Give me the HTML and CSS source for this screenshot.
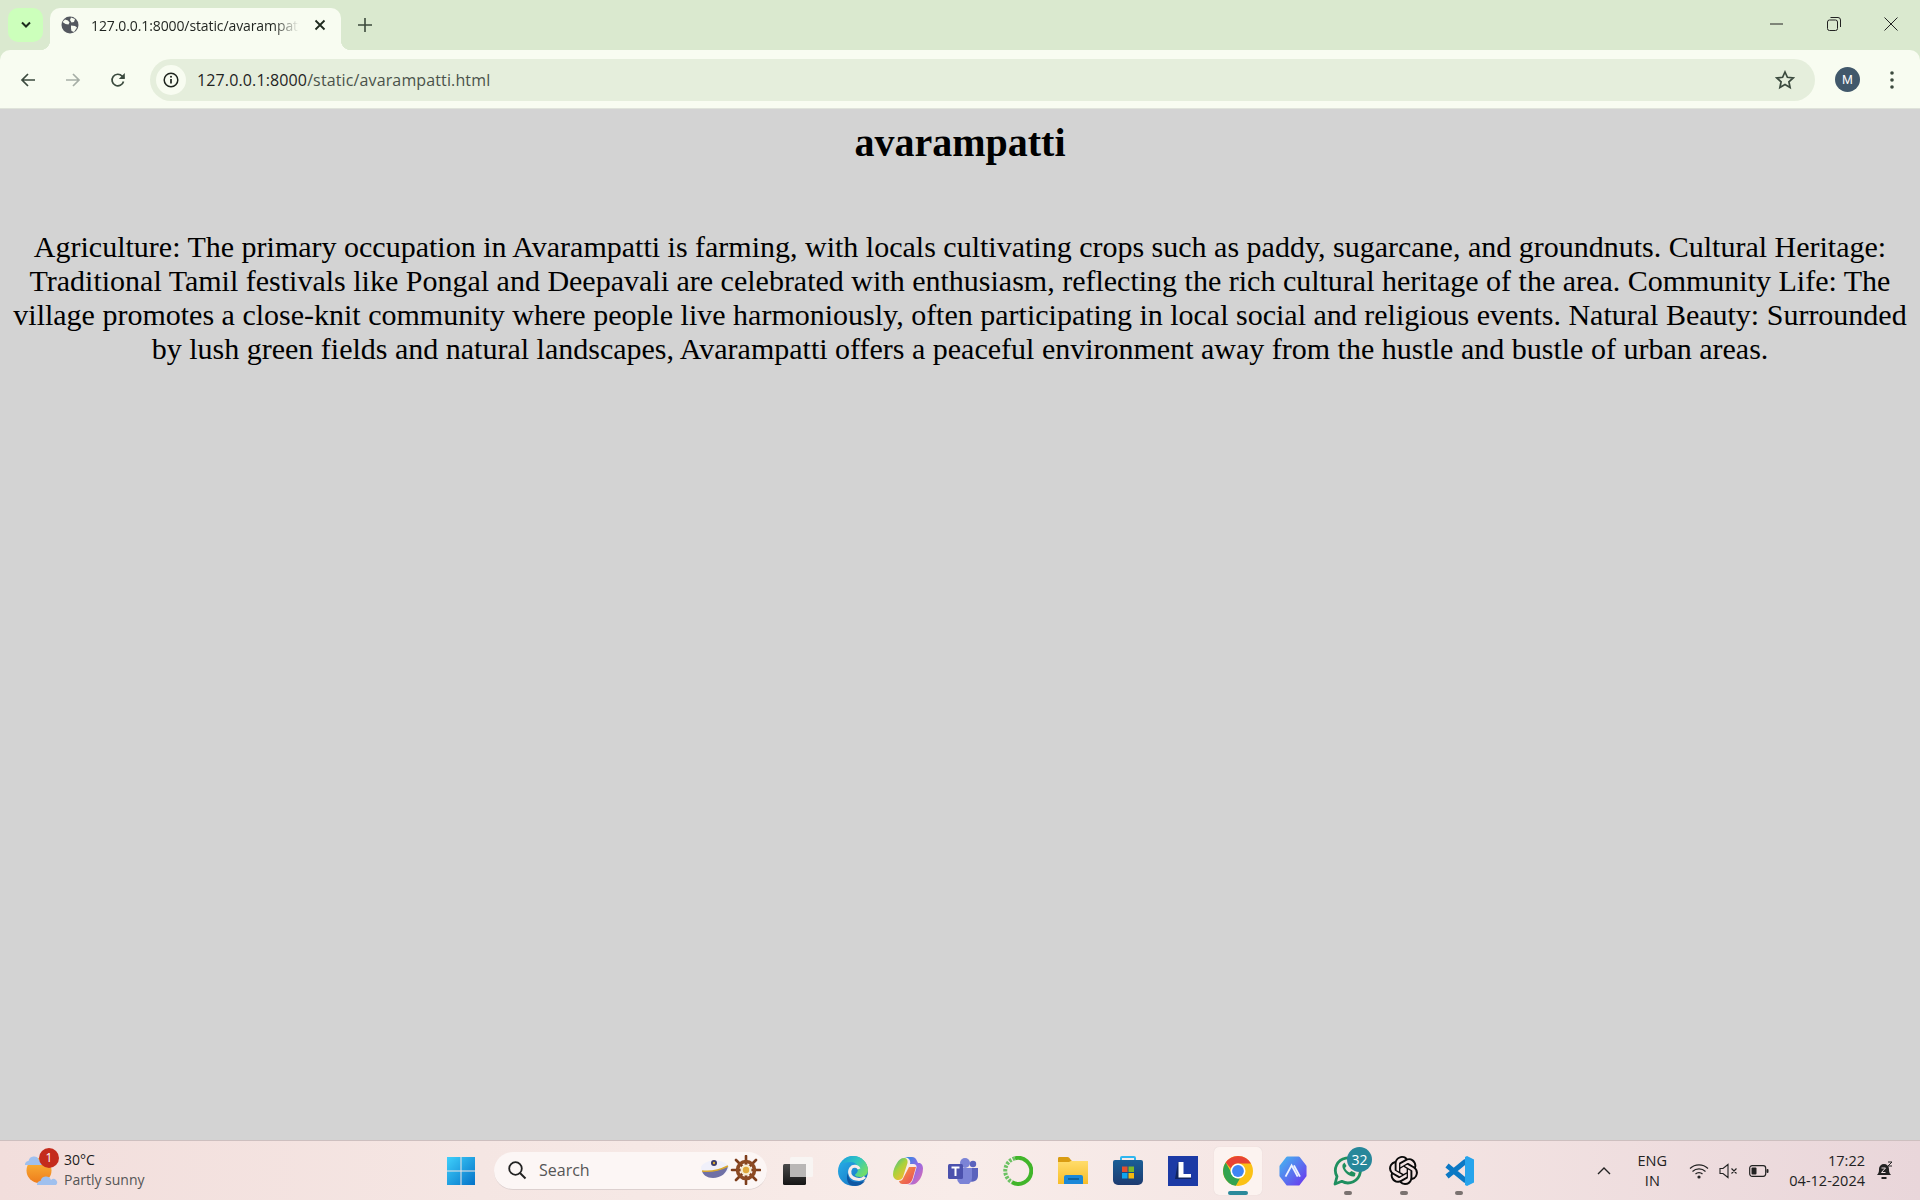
FILE: index.html
```html
<!DOCTYPE html>
<html lang="en">
<head>
    <meta charset="UTF-8">
    <title>avarampatti</title>
    <link rel="stylesheet" href="styles.css">
</head>
<body>
    <header class="chrome">
        <div class="tabstrip">
            <div class="tab-search">
                <svg width="12" height="8" viewBox="0 0 12 8"><path d="M2 1.500l4 4 4-4" fill="none" stroke="#1c2a1c" stroke-width="2"/></svg>
            </div>
            <div class="tab">
                <svg class="tab-globe" width="18" height="18" viewBox="0 0 18 18">
                    <circle cx="9" cy="9" r="8.500" fill="#54585f"/>
                    <path d="M4 3.500l3 1 1.500 2-1 2-3-.5-3-2zM10 1.500l4 1.500-1 3-2.500.5-1.500-2.500zM10 9.500l4 .5 2 1.500-3 4.500-2.500-1-.5-2.500z" fill="#f8fcf1"/>
                </svg>
                <span class="tab-title">127.0.0.1:8000/static/avarampatti.html</span>
                <svg class="tab-close" width="12" height="12" viewBox="0 0 12 12"><path d="M1.500 1.500l9 9M10.500 1.500l-9 9" stroke="#1f2a1f" stroke-width="1.800"/></svg>
            </div>
            <svg class="new-tab" width="14" height="14" viewBox="0 0 14 14"><path d="M7 0v14M0 7h14" stroke="#3c4a3c" stroke-width="1.600"/></svg>
            <div class="window-buttons">
                <svg width="14" height="14" viewBox="0 0 14 14"><path d="M0 7h13" stroke="#222" stroke-width="1"/></svg>
                <svg width="14" height="14" viewBox="0 0 14 14"><rect x=".5" y="3" width="10" height="10.500" rx="2" fill="none" stroke="#222"/><path d="M3.500 .5h7.500a2.500 2.500 0 0 1 2.500 2.500v7" fill="none" stroke="#222"/></svg>
                <svg width="14" height="14" viewBox="0 0 14 14"><path d="M.5 .5l13 13M13.500 .5l-13 13" stroke="#222" stroke-width="1"/></svg>
            </div>
        </div>

        <div class="toolbar">
            <svg class="tool" width="16" height="16" viewBox="0 0 16 16"><path d="M15 8H2M8 2L2 8l6 6" fill="none" stroke="#3b4a3e" stroke-width="1.700"/></svg>
            <svg class="tool" width="16" height="16" viewBox="0 0 16 16"><path d="M1 8h13M8 2l6 6-6 6" fill="none" stroke="#a6aea6" stroke-width="1.700"/></svg>
            <svg class="tool tool-reload" width="16" height="16" viewBox="0 0 16 16"><path d="M13.500 9.500a5.800 5.800 0 1 1-1.300-5.300L14 6" fill="none" stroke="#3b4a3e" stroke-width="1.700"/><path d="M14.800 1v6h-6z" fill="#3b4a3e"/></svg>
            <div class="omnibox">
                <div class="site-info">
                    <svg width="16" height="16" viewBox="0 0 16 16"><circle cx="8" cy="8" r="6.800" fill="none" stroke="#1e241e" stroke-width="1.500"/><path d="M8 7v4.500" stroke="#1e241e" stroke-width="1.700"/><circle cx="8" cy="4.800" r="1" fill="#1e241e"/></svg>
                </div>
                <div class="url"><span class="url-host">127.0.0.1:8000</span>/static/avarampatti.html</div>
                <svg width="20" height="20" viewBox="0 0 20 20"><path d="M10 2l2.400 5.300 5.800.6-4.300 3.900 1.200 5.700-5.100-2.900-5.100 2.900 1.200-5.700L1.800 7.900l5.800-.6z" fill="none" stroke="#3b4a3e" stroke-width="1.700"/></svg>
            </div>
            <div class="avatar">M</div>
            <svg class="menu" width="4" height="18" viewBox="0 0 4 18"><circle cx="2" cy="2" r="1.800" fill="#3b4a3e"/><circle cx="2" cy="9" r="1.800" fill="#3b4a3e"/><circle cx="2" cy="16" r="1.800" fill="#3b4a3e"/></svg>
        </div>
    </header>

    <main class="page">
        <h1>avarampatti</h1>
        <p>Agriculture: The primary occupation in Avarampatti is farming, with locals cultivating crops such as paddy, sugarcane, and groundnuts. Cultural Heritage: Traditional Tamil festivals like Pongal and Deepavali are celebrated with enthusiasm, reflecting the rich cultural heritage of the area. Community Life: The village promotes a close-knit community where people live harmoniously, often participating in local social and religious events. Natural Beauty: Surrounded by lush green fields and natural landscapes, Avarampatti offers a peaceful environment away from the hustle and bustle of urban areas.</p>
    </main>

    <footer class="taskbar">
        <div class="weather">
            <div class="weather-icon">
                <svg width="34" height="36" viewBox="0 0 34 36">
                    <defs><linearGradient id="sun" x1="0" y1="0" x2="0" y2="1"><stop offset="0" stop-color="#fbb93a"/><stop offset="1" stop-color="#ee7d1c"/></linearGradient></defs>
                    <circle cx="15" cy="17.500" r="12.500" fill="url(#sun)"/>
                    <path d="M1 12a3.500 3.500 0 0 1 3.500-4 5.500 5.500 0 0 1 10.500-1 3.500 3.500 0 0 1 3 5z" fill="#9fc0ee"/>
                    <path d="M13 32a3.500 3.500 0 0 1 3.500-4 5.500 5.500 0 0 1 10.500-1 3.500 3.500 0 0 1 5 5z" fill="#9fc0ee"/>
                </svg>
                <span class="weather-badge">1</span>
            </div>
            <div class="weather-text">
                <div class="temp">30°C</div>
                <div class="cond">Partly sunny</div>
            </div>
        </div>

        <div class="center">
            <div class="start">
                <svg width="30" height="30" viewBox="0 0 30 30">
                    <defs><linearGradient id="win" x1="0" y1="0" x2="1" y2="1"><stop offset="0" stop-color="#3fd0fb"/><stop offset="1" stop-color="#0472c8"/></linearGradient></defs>
                    <path d="M1 1h13.500v13.500H1zM15.500 1H29v13.500H15.500zM1 15.500h13.500V29H1zM15.500 15.500H29V29H15.500z" fill="url(#win)"/>
                </svg>
            </div>
            <div class="search">
                <svg width="20" height="20" viewBox="0 0 20 20"><circle cx="8.500" cy="8.500" r="6.300" fill="none" stroke="#222" stroke-width="1.800"/><path d="M13 13l5.500 5.500" stroke="#222" stroke-width="2"/></svg>
                <span class="search-label">Search</span>
                <svg class="search-art" width="61" height="30" viewBox="0 0 61 30">
                    <ellipse cx="15" cy="13" rx="14" ry="7.500" fill="#f0f0fa"/>
                    <path d="M2 16c7 1 16 0 26-5-1 7-7 12-15 12-6 0-10-3-11-7z" fill="#6f70a6"/>
                    <path d="M2 16c7 1 16 0 26-5" fill="none" stroke="#d9a92f" stroke-width="1.500"/>
                    <circle cx="14" cy="8" r="3" fill="#3a3a6a"/>
                    <circle cx="14" cy="8" r="1.200" fill="#d9a92f"/>
                    <path d="M46 1v28M32 15h28M36 5l20 20M56 5L36 25" stroke="#7d3d1b" stroke-width="2.600" stroke-linecap="round"/>
                    <circle cx="46" cy="15" r="8.500" fill="none" stroke="#8c4a23" stroke-width="3.600"/>
                    <circle cx="46" cy="15" r="5.500" fill="#f6ecd2"/>
                    <circle cx="46" cy="15" r="3.200" fill="#e0a93c"/>
                </svg>
            </div>
            <div class="apps">
                <div class="app">
                    <svg width="30" height="28" viewBox="0 0 30 28">
                        <defs><linearGradient id="snapd" x1="0" y1="0" x2="0" y2="1"><stop offset="0" stop-color="#4a4a4a"/><stop offset="1" stop-color="#151515"/></linearGradient></defs>
                        <rect x="0" y="7" width="23" height="21" rx="1.500" fill="url(#snapd)"/>
                        <rect x="7" y="0" width="23" height="20" rx="1.500" fill="#f8f5f3"/>
                        <rect x="7" y="7" width="16" height="13" fill="#b9b7b6"/>
                    </svg>
                </div>
                <div class="app">
                    <svg width="30" height="30" viewBox="0 0 30 30">
                        <defs>
                            <linearGradient id="edge" x1="0" y1="0" x2="1" y2="1"><stop offset="0" stop-color="#2ab4ea"/><stop offset=".7" stop-color="#1a7fcb"/><stop offset="1" stop-color="#0d5aa6"/></linearGradient>
                            <linearGradient id="edget" x1="0" y1="0" x2="1" y2=".6"><stop offset="0" stop-color="#1c9ce0"/><stop offset=".55" stop-color="#30c7c0"/><stop offset="1" stop-color="#6fdc6b"/></linearGradient>
                        </defs>
                        <circle cx="15" cy="15" r="15" fill="url(#edge)"/>
                        <path d="M2 8C6 2 11 0 15 0c9 0 15 7 15 14 0 5-4 7-8 7-3 0-5-1-5-2s3-2 3-6c0-4-3-7-7-7-5 0-9 1-11 2z" fill="url(#edget)"/>
                        <path d="M21 13c-1-3-6-4-8-1-3 4-1 10 5 11 4 1 7 0 9-2" fill="none" stroke="#f8ecea" stroke-width="3"/>
                        <path d="M12 29c-3-3-4-8-2-12 0 5 3 9 8 9 4 .5 7 0 9-1-2 3-6 5-10 5z" fill="#0f57a3"/>
                    </svg>
                </div>
                <div class="app">
                    <svg width="30" height="28" viewBox="0 0 30 28">
                        <defs>
                            <linearGradient id="cop" x1="0" y1="0" x2="1" y2="1"><stop offset="0" stop-color="#1f8fe0"/><stop offset=".5" stop-color="#8f6be8"/><stop offset="1" stop-color="#ea6aa8"/></linearGradient>
                            <linearGradient id="cop2" x1="0" y1="0" x2=".7" y2="1"><stop offset="0" stop-color="#30b8a0"/><stop offset=".5" stop-color="#a8d23c"/><stop offset="1" stop-color="#f6bb2e"/></linearGradient>
                            <linearGradient id="cop3" x1="0" y1="0" x2="1" y2="1"><stop offset="0" stop-color="#f6a03a"/><stop offset="1" stop-color="#e8445c"/></linearGradient>
                        </defs>
                        <path d="M11 0h8c2.500 0 4 1.500 5 4l1 2h1c2.500 0 4 2.500 4 5.500 0 5-2 10-5 13-1.500 2-3.500 3-5.500 3H14c3 0 5-2 6-5l3.500-12c.5-2-1-3.500-3-3.500H17c1-3-1-7-6-7z" fill="url(#cop)"/>
                        <path d="M4 6c1.500-3 4-5 7-5 2.500 0 4 2 3.500 5L10 20c-.7 2-2.500 3-4.500 3C2.500 23 0 21 0 17.500 0 13 2 9 4 6z" fill="url(#cop2)"/>
                        <path d="M16 10h7l-3.500 12c-1 3-3 5-6 5h-4c-2 0-3-1-3.500-3 2 0 4-1 4.500-3.500z" fill="url(#cop3)"/>
                    </svg>
                </div>
                <div class="app">
                    <svg width="30" height="26" viewBox="0 0 30 26">
                        <circle cx="17" cy="5" r="5" fill="#7b83d6"/><circle cx="25" cy="6" r="3.200" fill="#5b63bd"/>
                        <path d="M20 10h10v8a6 6 0 0 1-9 5z" fill="#5b63bd"/>
                        <path d="M9 10h15v10a6 6 0 0 1-15 0z" fill="#7b83d6"/>
                        <rect x="0" y="6" width="15" height="15" rx="1.500" fill="#4b51ad"/>
                        <path d="M3.500 9.500h8M7.500 9.500v8.500" stroke="#fff" stroke-width="2"/>
                    </svg>
                </div>
                <div class="app">
                    <svg width="30" height="30" viewBox="0 0 30 30">
                        <path d="M12 2.300a13 13 0 1 1-3 24" fill="none" stroke="#41b52a" stroke-width="4"/>
                        <path d="M12 2.300a13 13 0 0 0-3 24" fill="none" stroke="#6cc263" stroke-width="4" stroke-dasharray="2.500 1.300"/>
                    </svg>
                </div>
                <div class="app">
                    <svg width="30" height="27" viewBox="0 0 30 27">
                        <defs><linearGradient id="fold" x1="0" y1="0" x2="0" y2="1"><stop offset="0" stop-color="#ffdc6b"/><stop offset="1" stop-color="#f8bd28"/></linearGradient></defs>
                        <path d="M1.500 0h8c1.500 0 2 1 3 2.500L14 4h16v3H0V1.500C0 .5.500 0 1.500 0z" fill="#d99c12"/>
                        <path d="M0 5h11l2-1h17v23H0z" fill="url(#fold)"/>
                        <path d="M6 27v-7a2 2 0 0 1 2-2h15a2 2 0 0 1 2 2v7z" fill="#1b88d8"/>
                        <path d="M10 22h11" stroke="#0a4f80" stroke-width="1.300"/>
                    </svg>
                </div>
                <div class="app">
                    <svg width="30" height="29" viewBox="0 0 30 29">
                        <defs><linearGradient id="store" x1="0" y1="0" x2="0" y2="1"><stop offset="0" stop-color="#1a5e96"/><stop offset="1" stop-color="#1d3b70"/></linearGradient></defs>
                        <path d="M8 5V2a1 1 0 0 1 1-1h12a1 1 0 0 1 1 1v3" fill="none" stroke="#2fb6ef" stroke-width="2"/>
                        <path d="M0 6a2 2 0 0 1 2-2h26a2 2 0 0 1 2 2v18a5 5 0 0 1-5 5H5a5 5 0 0 1-5-5z" fill="url(#store)"/>
                        <rect x="9" y="10.500" width="5.500" height="5.500" fill="#e5502d"/><rect x="15.500" y="10.500" width="5.500" height="5.500" fill="#7ab82a"/>
                        <rect x="9" y="17" width="5.500" height="5.500" fill="#10a5ee"/><rect x="15.500" y="17" width="5.500" height="5.500" fill="#f6b90e"/>
                    </svg>
                </div>
                <div class="app">
                    <svg width="30" height="30" viewBox="0 0 30 30">
                        <rect width="30" height="30" fill="#1c3aa5"/>
                        <path d="M10 6l-3 17h16.500l-1-2.500H12.500V6z" fill="#10245f"/>
                        <path d="M10.500 6h5v12h7.500v3.500H10.500z" fill="#fff"/>
                    </svg>
                </div>
                <div class="app app-active">
                    <svg width="30" height="30" viewBox="0 0 32 32">
                        <circle cx="16" cy="16" r="16" fill="#fbc116"/>
                        <path d="M16 0a16 16 0 0 1 13.900 8H16a8 8 0 0 0-7.500 5.200L2.800 7A16 16 0 0 1 16 0z" fill="#e84335"/>
                        <path d="M2.800 7l6.600 11.500A8 8 0 0 0 18 24l-4.300 7.800A16 16 0 0 1 2.800 7z" fill="#32a350"/>
                        <circle cx="16" cy="16" r="8" fill="#fff"/>
                        <circle cx="16" cy="16" r="6.300" fill="#3f85f4"/>
                    </svg>
                    <span class="dot dot-active"></span>
                </div>
                <div class="app">
                    <svg width="28" height="30" viewBox="0 0 30 32">
                        <defs><linearGradient id="hex" x1="0" y1="0" x2="1" y2="1"><stop offset="0" stop-color="#46b4f0"/><stop offset="1" stop-color="#6a38ee"/></linearGradient></defs>
                        <path d="M9 2h12l7 9v10l-7 9H9l-7-9V11z" fill="url(#hex)" stroke="url(#hex)" stroke-width="3" stroke-linejoin="round"/>
                        <path d="M7 22l6.500-12L20 22M16 10l6.500 12" fill="none" stroke="#eef2ff" stroke-width="2"/>
                    </svg>
                </div>
                <div class="app">
                    <svg width="30" height="30" viewBox="0 0 30 30">
                        <path d="M2 28l2-7.500a12.500 12.500 0 1 1 4.800 4.800z" fill="none" stroke="#1f8f5f" stroke-width="2.800" stroke-linejoin="round"/>
                        <path d="M10 8c-1.500 2 0 6 3 9s7 4.500 9 3l.5-3-4-2-2 1.500c-2-1-3.500-2.500-4.500-4.500l1.500-2-2-3.500z" fill="#1f8f5f"/>
                    </svg>
                    <span class="app-count">32</span>
                    <span class="dot"></span>
                </div>
                <div class="app">
                    <svg width="29" height="29" viewBox="0 0 24 24"><path fill="#0a0a0a" d="M22.2819 9.8211a5.9847 5.9847 0 0 0-.5157-4.9108 6.0462 6.0462 0 0 0-6.5098-2.9A6.0651 6.0651 0 0 0 4.9807 4.1818a5.9847 5.9847 0 0 0-3.9977 2.9 6.0462 6.0462 0 0 0 .7427 7.0966 5.98 5.98 0 0 0 .511 4.9107 6.051 6.051 0 0 0 6.5146 2.9001A5.9847 5.9847 0 0 0 13.2599 24a6.0557 6.0557 0 0 0 5.7718-4.2058 5.9894 5.9894 0 0 0 3.9977-2.9001 6.0557 6.0557 0 0 0-.7475-7.0729zm-9.022 12.6081a4.4755 4.4755 0 0 1-2.8764-1.0408l.1419-.0804 4.7783-2.7582a.7948.7948 0 0 0 .3927-.6813v-6.7369l2.02 1.1686a.071.071 0 0 1 .038.052v5.5826a4.504 4.504 0 0 1-4.4945 4.4944zm-9.6607-4.1254a4.4708 4.4708 0 0 1-.5346-3.0137l.142.0852 4.783 2.7582a.7712.7712 0 0 0 .7806 0l5.8428-3.3685v2.3324a.0804.0804 0 0 1-.0332.0615L9.74 19.9502a4.4992 4.4992 0 0 1-6.1408-1.6464zM2.3408 7.8956a4.485 4.485 0 0 1 2.3655-1.9728V11.6a.7664.7664 0 0 0 .3879.6765l5.8144 3.3543-2.0201 1.1685a.0757.0757 0 0 1-.071 0l-4.8303-2.7865A4.504 4.504 0 0 1 2.3408 7.872zm16.5963 3.8558L13.1038 8.364 15.1192 7.2a.0757.0757 0 0 1 .071 0l4.8303 2.7913a4.4944 4.4944 0 0 1-.6765 8.1042v-5.6772a.79.79 0 0 0-.407-.667zm2.0107-3.0231l-.142-.0852-4.7735-2.7818a.7759.7759 0 0 0-.7854 0L9.409 9.2297V6.8974a.0662.0662 0 0 1 .0284-.0615l4.8303-2.7866a4.4992 4.4992 0 0 1 6.6802 4.66zM8.3065 12.863l-2.02-1.1638a.0804.0804 0 0 1-.038-.0567V6.0742a4.4992 4.4992 0 0 1 7.3757-3.4537l-.142.0805L8.704 5.459a.7948.7948 0 0 0-.3927.6813zm1.0976-2.3654l2.602-1.4998 2.6069 1.4998v2.9994l-2.5974 1.4997-2.6067-1.4997Z"/></svg>
                    <span class="dot"></span>
                </div>
                <div class="app">
                    <svg width="30" height="30" viewBox="0 0 30 30">
                        <path d="M3 9.500L22 25M3 20.500L22 5" stroke="#0b78c4" stroke-width="5"/>
                        <path d="M21 1l2-1 7 3.500v23L23 30l-2-1z" fill="#27a4ec"/>
                    </svg>
                    <span class="dot"></span>
                </div>
            </div>
        </div>

        <div class="tray">
            <svg width="14" height="9" viewBox="0 0 14 9"><path d="M1 8l6-6 6 6" fill="none" stroke="#222" stroke-width="1.400"/></svg>
            <div class="lang">ENG<br>IN</div>
            <div class="tray-icons">
                <svg width="20" height="16" viewBox="0 0 20 16" fill="none" stroke="#222" stroke-width="1.200"><path d="M1 5.500a13 13 0 0 1 18 0M3.500 8.500a9.500 9.500 0 0 1 13 0M6.500 11a5 5 0 0 1 7 0"/><circle cx="10" cy="14" r="1" fill="#222"/></svg>
                <svg width="20" height="16" viewBox="0 0 20 16" fill="none" stroke="#222" stroke-width="1.100"><path d="M1 5.500h3L9 1.500v13L4 10.500H1zM12.500 5.500l5 5M17.500 5.500l-5 5"/></svg>
                <svg width="20" height="14" viewBox="0 0 20 14"><rect x=".7" y="1.700" width="16" height="10.600" rx="2.500" fill="none" stroke="#222" stroke-width="1.200"/><rect x="2.500" y="3.500" width="5" height="7" rx="1" fill="#222"/><rect x="17.500" y="5" width="2" height="4" rx="1" fill="#222"/></svg>
            </div>
            <div class="clock">17:22<br>04-12-2024</div>
            <svg class="bell" width="18" height="20" viewBox="0 0 18 20">
                <path d="M1 14c2-2 2-4 2-6a5 5 0 0 1 10 0c0 2 0 4 2 6z" fill="#222"/>
                <path d="M5.500 17h5" stroke="#222" stroke-width="2"/>
                <path d="M5.500 7h4l-4 4.500h4" fill="none" stroke="#eedfe2" stroke-width="1"/>
                <path d="M12 1h4l-4 4h4" fill="none" stroke="#222" stroke-width="1"/>
            </svg>
        </div>
    </footer>
</body>
</html>
```

FILE: styles.css
```css
body {
    margin: 0;
    display: flex;
    flex-direction: column;
    height: 1200px;
    overflow: hidden;
    font-family: "Liberation Sans", Arial, sans-serif;
    background-color: #d3d3d3;
}

/* browser top */
.chrome {
    flex-shrink: 0;
    background-color: #dae9cf;
}

.tabstrip {
    height: 50px;
    display: flex;
    align-items: flex-start;
}

.tab-search {
    width: 35px;
    height: 34px;
    margin: 8px 7px 0 8px;
    border-radius: 10px;
    background-color: #ccffbb;
    display: flex;
    align-items: center;
    justify-content: center;
}

.tab {
    width: 291px;
    height: 42px;
    margin-top: 8px;
    box-sizing: border-box;
    padding: 0 14px 0 11px;
    border-radius: 10px 10px 0 0;
    background-color: #f8fcf1;
    display: flex;
    align-items: center;
    position: relative;
}

/* little curves where the tab meets the toolbar */
.tab::before,
.tab::after {
    content: "";
    position: absolute;
    bottom: 0;
    width: 10px;
    height: 10px;
}

.tab::before {
    left: -10px;
    background: radial-gradient(circle at 0 0, transparent 10px, #f8fcf1 10.500px);
}

.tab::after {
    right: -10px;
    background: radial-gradient(circle at 100% 0, transparent 10px, #f8fcf1 10.500px);
}

.tab-globe {
    flex-shrink: 0;
    margin: 0 12px 8px 0;
}

.tab-title {
    width: 208px;
    margin-bottom: 8px;
    overflow: hidden;
    white-space: nowrap;
    font-family: "Open Sans", sans-serif;
    font-size: 14px;
    letter-spacing: -0.1px;
    color: #1f231f;
    -webkit-mask-image: linear-gradient(to right, #000 88%, transparent);
    mask-image: linear-gradient(to right, #000 88%, transparent);
}

.tab-close {
    margin: 0 0 8px 15px;
}

.new-tab {
    margin: 18px 0 0 17px;
}

.window-buttons {
    margin-left: auto;
    padding: 17px 22px 0 0;
    display: flex;
    gap: 43px;
}

.toolbar {
    height: 59px;
    box-sizing: border-box;
    padding: 1px 0 0 20px;
    border-radius: 10px 10px 0 0;
    border-bottom: 1px solid #dfe3da;
    background-color: #f8fcf1;
    display: flex;
    align-items: center;
}

.tool {
    margin-right: 29px;
}

.tool-reload {
    margin-right: 24px;
}

.omnibox {
    width: 1665px;
    flex-shrink: 0;
    height: 42px;
    box-sizing: border-box;
    padding: 0 20px 0 6px;
    border-radius: 21px;
    background-color: #e5eedc;
    display: flex;
    align-items: center;
}

.site-info {
    width: 30px;
    height: 30px;
    border-radius: 50%;
    background-color: #f8fcf1;
    display: flex;
    align-items: center;
    justify-content: center;
}

.url {
    margin-left: 11px;
    flex: 1;
    font-family: "Open Sans", sans-serif;
    font-size: 16px;
    letter-spacing: 0.13px;
    color: #4a524a;
}

.url-host {
    color: #1f231f;
}

.avatar {
    width: 25px;
    height: 25px;
    margin-left: 20px;
    border-radius: 50%;
    background-color: #41586b;
    color: #fff;
    font-size: 13px;
    line-height: 25px;
    text-align: center;
    flex-shrink: 0;
}

.menu {
    margin-left: 30px;
    flex-shrink: 0;
}

/* page content */
.page {
    flex: 1;
    min-height: 0;
    padding: 8px;
    color: #000;
    font-family: "Liberation Serif", "Times New Roman", serif;
    text-align: center;
}

h1 {
    margin: 0;
    padding-top: 3px;
    font-size: 40px;
    line-height: 46px;
}

p {
    margin: 0;
    padding-top: 64px;
    font-size: 30px;
    line-height: 34px;
}

/* taskbar */
.taskbar {
    height: 60px;
    flex-shrink: 0;
    box-sizing: border-box;
    border-top: 1px solid #cdbfbf;
    background: linear-gradient(to right, #f2dedc 0%, #f5e6e3 25%, #f8ece9 50%, #f3e3e2 75%, #e9d6da 100%);
    display: flex;
    align-items: center;
}

.weather {
    width: 446px;
    flex-shrink: 0;
    box-sizing: border-box;
    padding-left: 24px;
    display: flex;
    align-items: center;
}

.weather-icon {
    position: relative;
    width: 34px;
    height: 36px;
    margin-right: 6px;
}

.weather-badge {
    position: absolute;
    top: -5px;
    left: 15px;
    width: 20px;
    height: 20px;
    border-radius: 50%;
    background-color: #c42b1c;
    color: #fff;
    font-family: "Open Sans", sans-serif;
    font-size: 12px;
    line-height: 20px;
    text-align: center;
}

.weather-text {
    font-family: "Open Sans", sans-serif;
    font-size: 14px;
    line-height: 20px;
    margin-top: -1px;
    color: #1c1c1c;
}

.cond {
    color: #555;
}

.center {
    display: flex;
    align-items: center;
}

.start {
    width: 30px;
    height: 30px;
}

.search {
    width: 273px;
    height: 38px;
    margin-left: 18px;
    box-sizing: border-box;
    padding: 0 6px 0 13px;
    border-radius: 19px;
    border-bottom: 1px solid #dcd0cf;
    background-color: #fcf6f5;
    display: flex;
    align-items: center;
}

.search-label {
    margin-left: 12px;
    flex: 1;
    font-family: "Open Sans", sans-serif;
    font-size: 16px;
    color: #555;
}

.search-art {
    flex-shrink: 0;
}

.apps {
    display: flex;
    margin-left: 3px;
}

.app {
    position: relative;
    width: 55.100px;
    height: 50px;
    display: flex;
    align-items: center;
    justify-content: center;
}

.app svg {
    position: relative;
}

.app-active::before {
    content: "";
    position: absolute;
    top: 1px;
    left: 3.500px;
    width: 48px;
    height: 48px;
    background-color: #fcf3f0;
    border-radius: 5px;
    box-shadow: 0 0 1px #d9cccb;
}

.dot {
    position: absolute;
    bottom: 1px;
    left: 50%;
    width: 8px;
    height: 3.500px;
    margin-left: -4px;
    border-radius: 2px;
    background-color: #7a7270;
}

.dot-active {
    width: 20px;
    height: 4px;
    margin-left: -10px;
    background-color: #2b8a9b;
}

.app-count {
    position: absolute;
    top: 1px;
    right: 4px;
    width: 25px;
    height: 25px;
    border-radius: 50%;
    background-color: #28879a;
    color: #fff;
    font-family: "Open Sans", sans-serif;
    font-size: 14px;
    line-height: 25px;
    text-align: center;
}

.tray {
    margin-left: auto;
    padding-right: 26px;
    display: flex;
    align-items: center;
    color: #222;
    font-family: "Open Sans", sans-serif;
    font-size: 14.500px;
}

.lang {
    margin-left: 26px;
    width: 30px;
    text-align: center;
    line-height: 20px;
}

.tray-icons {
    margin-left: 22px;
    display: flex;
    align-items: center;
    gap: 10px;
}

.clock {
    margin-left: 20px;
    text-align: right;
    line-height: 20px;
}

.bell {
    margin-left: 11px;
}
```
